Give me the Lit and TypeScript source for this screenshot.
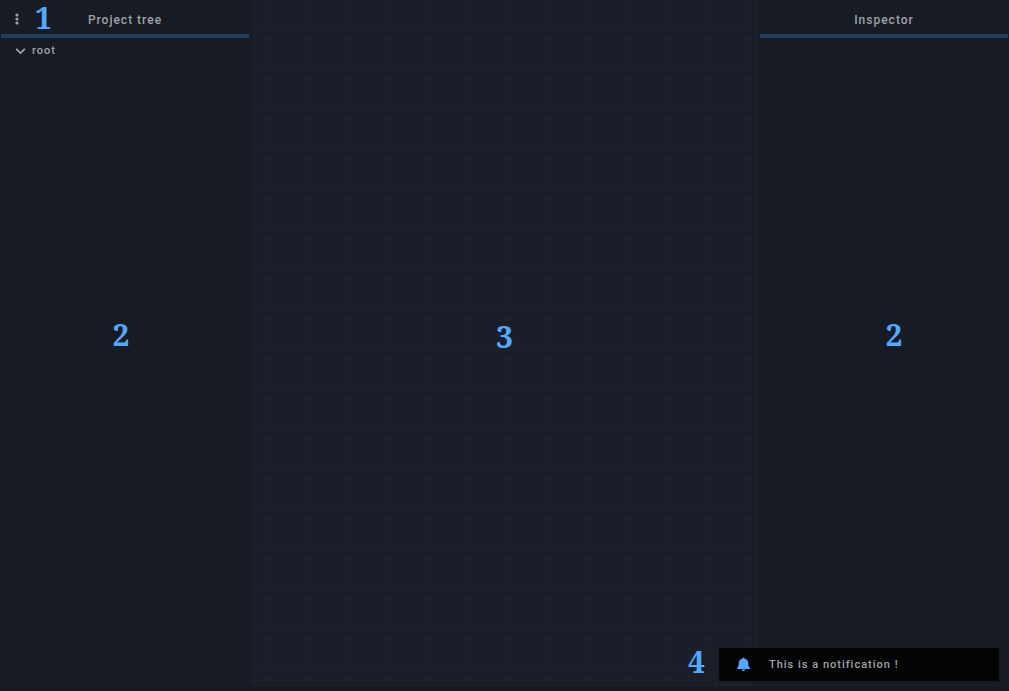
import { LitElement, html, css } from "lit";
import { customElement, property } from "lit/decorators.js";

@customElement("side-panel")
class SidePanel extends LitElement {
  @property() heading = "";
  @property() mark = "";

  static styles = css`
    :host {
      display: flex;
      flex-direction: column;
      min-width: 0;
      background: #171b24;
    }
    header {
      display: grid;
      grid-template-rows: 32px;
      align-items: center;
      padding-top: 2px;
      border-bottom: 4px solid #263f5b;
      margin: 0 1px;
    }
    h2 {
      grid-area: 1 / 1;
      margin: 0;
      padding-top: 4px;
      text-align: center;
      font-size: 12px;
      line-height: 16px;
      font-weight: 500;
      letter-spacing: 1px;
    }
    .tools {
      grid-area: 1 / 1;
      justify-self: start;
    }
    .body {
      display: grid;
      grid-template: minmax(0, 1fr) / minmax(0, 1fr);
      flex: 1;
    }
    .content {
      grid-area: 1 / 1;
    }
    .mark {
      grid-area: 1 / 1;
      place-self: center;
      padding: 0 var(--mark-right, 8px) 56px var(--mark-left, 0px);
      font: bold 30px/36px "Noto Serif", "Droid Serif", "DejaVu Serif Condensed", "DejaVu Serif", serif;
      color: #54a8ff;
    }
  `;

  render() {
    return html`
      <header>
        <div class="tools"><slot name="tools"></slot></div>
        <h2>${this.heading}</h2>
      </header>
      <div class="body">
        <div class="content"><slot></slot></div>
        <span class="mark">${this.mark}</span>
      </div>
    `;
  }
}

@customElement("app-root")
class AppRoot extends LitElement {
  static styles = css`
    :host {
      display: grid;
      grid-template-columns: 250px minmax(0, 1fr) 250px;
      position: relative;
      box-sizing: border-box;
      height: 100vh;
      padding-bottom: 4px;
      background: #141821;
      color: #a0a2a7;
      font-family: Roboto, sans-serif;
      overflow: hidden;
    }
    .inspector {
      --mark-left: 20px;
      --mark-right: 0px;
    }
    .mark {
      font: bold 30px/36px "Noto Serif", "Droid Serif", "DejaVu Serif Condensed", "DejaVu Serif", serif;
      color: #54a8ff;
    }
    .tools {
      display: flex;
      align-items: center;
      gap: 10px;
      padding-left: 8px;
    }
    .tools .mark {
      line-height: 32px;
    }
    button {
      display: flex;
      align-items: center;
      padding: 0;
      border: 0;
      background: none;
      color: inherit;
      font: inherit;
    }
    .menu {
      justify-content: center;
      width: 16px;
      height: 24px;
      padding-top: 2px;
    }
    .node {
      gap: 6px;
      margin: 5px 15px;
      font-size: 11px;
      line-height: 16px;
      font-weight: 500;
      letter-spacing: 1px;
    }
    main {
      display: grid;
      padding: 2px;
      background: #1a1e29;
    }
    .grid {
      display: grid;
      place-items: center;
      padding-bottom: 14px;
      background-image:
        linear-gradient(#161a24 1px, transparent 1px),
        linear-gradient(#181c26 1px, transparent 1px),
        linear-gradient(90deg, #181c26 1px, transparent 1px);
      background-size: 100% 40px, 100% 10px, 10px 100%;
      background-position: 0 30px, 0 0, 0 0;
      background-color: #1a1f2a;
    }
    .toast {
      position: absolute;
      right: 10px;
      bottom: 10px;
      display: flex;
      align-items: flex-end;
      gap: 14px;
    }
    .toast .mark {
      padding-bottom: 1px;
    }
    .message {
      display: flex;
      align-items: center;
      gap: 18px;
      box-sizing: border-box;
      width: 280px;
      height: 33px;
      padding-left: 17px;
      background: #040506;
      font-size: 11px;
      line-height: 16px;
      font-weight: 500;
      letter-spacing: 1px;
    }
  `;

  render() {
    return html`
      <side-panel heading="Project tree" mark="2">
        <div class="tools" slot="tools">
          <button class="menu" aria-label="Menu">
            <svg width="4" height="12" viewBox="0 0 4 12" fill="#a0a2a7">
              <circle cx="2" cy="2" r="1.6" /><circle cx="2" cy="6" r="1.6" /><circle cx="2" cy="10" r="1.6" />
            </svg>
          </button>
          <span class="mark">1</span>
        </div>
        <button class="node" aria-expanded="true">
          <svg width="11" height="8" viewBox="0 0 11 8" fill="none" stroke="#a0a2a7" stroke-width="1.8">
            <path d="M1.2 1.8 5.5 6.1 9.8 1.8" />
          </svg>
          root
        </button>
      </side-panel>
      <main><div class="grid"><span class="mark">3</span></div></main>
      <side-panel class="inspector" heading="Inspector" mark="2"></side-panel>
      <div class="toast">
        <span class="mark">4</span>
        <div class="message" role="status">
          <svg width="15" height="15" viewBox="0 0 15 15" fill="#54a8ff">
            <path d="M7.5 .6c.5 0 .8.4.8 1 2.5.5 3.9 2.3 4 4.8.1 2.2.4 3.4 1.5 4.4v1.1H1.2v-1.1c1.1-1 1.4-2.2 1.5-4.4.1-2.5 1.5-4.3 4-4.8 0-.6.3-1 .8-1zM5.9 12.6h3.2c0 1-.7 1.6-1.6 1.6s-1.6-.6-1.6-1.6z" />
          </svg>
          <span>This is a notification !</span>
        </div>
      </div>
    `;
  }
}
